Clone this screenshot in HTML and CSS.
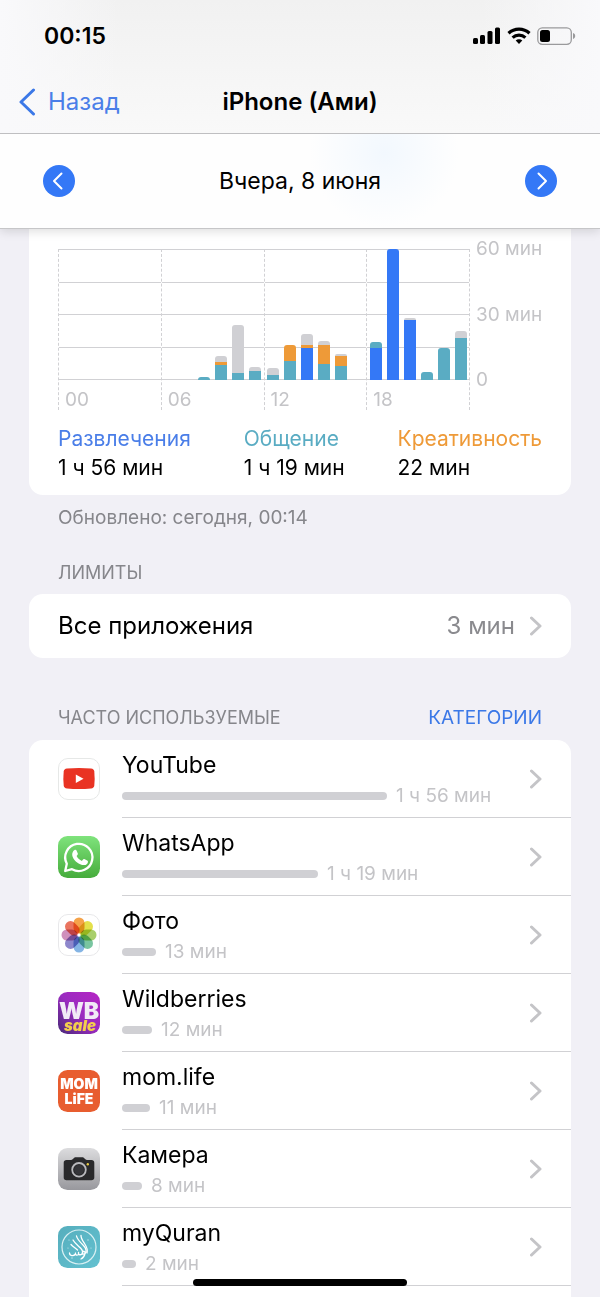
FILE: index.html
```html
<!DOCTYPE html>
<html lang="ru">
<head>
  <meta charset="UTF-8">
  <meta name="viewport" content="width=device-width, initial-scale=1.0">
  <title>iPhone (Ами)</title>
  <link rel="stylesheet" href="styles.css">
</head>
<body>

  <header class="top">
    <div class="top-bar">
      <div class="status">
        <span class="time">00:15</span>
        <span class="status-icons">
          <svg width="28" height="18" viewBox="0 0 28 18">
            <rect x="0" y="11" width="5" height="6" rx="1.5"/>
            <rect x="7" y="8" width="5" height="9" rx="1.5"/>
            <rect x="14.500" y="4" width="5" height="13" rx="1.5"/>
            <rect x="22" y="0.500" width="5" height="16.500" rx="1.5"/>
          </svg>
          <svg width="24" height="18" viewBox="0 0 24 18" fill="none" stroke="#000" stroke-width="3.200">
            <path d="M1.500 6.300a15.500 15.500 0 0 1 21 0"/>
            <path d="M5.600 10.600a9.500 9.500 0 0 1 12.800 0"/>
            <path d="M12 17l-3.300-3.400a4.700 4.700 0 0 1 6.600 0z" fill="#000" stroke="none"/>
          </svg>
          <svg width="39" height="18" viewBox="0 0 39 18">
            <rect x="0.800" y="0.800" width="33.500" height="16.500" rx="4.500" fill="none" stroke="#9a9a9c" stroke-width="1.300"/>
            <rect x="3" y="3" width="10" height="12" rx="2.500"/>
            <path d="M36 6v6c1.400-.4 2.200-1.600 2.200-3S37.400 6.400 36 6z" fill="#9a9a9c"/>
          </svg>
        </span>
      </div>
      <nav class="nav">
        <a class="back" href="#">
          <svg width="18" height="28" viewBox="0 0 18 28"><path d="M15.500 2L3 14l12.500 12"/></svg>
          Назад
        </a>
        <h1>iPhone (Ами)</h1>
      </nav>
    </div>
    <div class="date-bar">
      <button class="round" aria-label="Предыдущий день">
        <svg width="32" height="32" viewBox="0 0 32 32"><path d="M18.500 8.500L11 16l7.500 7.500"/></svg>
      </button>
      <span class="date">Вчера, 8 июня</span>
      <button class="round" aria-label="Следующий день">
        <svg width="32" height="32" viewBox="0 0 32 32"><path d="M13.500 8.500L21 16l-7.500 7.500"/></svg>
      </button>
    </div>
  </header>

  <main>
    <section class="card usage">
      <div class="chart">
        <div class="plot" id="plot"></div>
        <div class="scale"><span>60 мин</span><span>30 мин</span><span>0</span></div>
      </div>
      <dl class="legend">
        <div><dt class="fun">Развлечения</dt><dd>1 ч 56 мин</dd></div>
        <div><dt class="social">Общение</dt><dd>1 ч 19 мин</dd></div>
        <div><dt class="creative">Креативность</dt><dd>22 мин</dd></div>
      </dl>
    </section>
    <p class="updated">Обновлено: сегодня, 00:14</p>

    <h2 class="caption limits-title">Лимиты</h2>
    <a class="card limit" href="#">
      <span>Все приложения</span>
      <span class="limit-value">3 мин</span>
      <svg class="chevron" width="12" height="20" viewBox="0 0 12 20"><path d="M1.500 2l8.500 8-8.500 8"/></svg>
    </a>

    <div class="list-head">
      <h2 class="caption">Часто используемые</h2>
      <button class="switch">Категории</button>
    </div>
    <div class="card apps">
      <a class="app" href="#">
        <svg class="icon" viewBox="0 0 42 42">
          <rect x="0.500" y="0.500" width="41" height="41" rx="9.500" fill="#fff" stroke="#e6e8e7"/>
          <path d="M9 10.500q12-1 24 0 3 .3 3.300 3 .7 7 0 14-.3 2.700-3.300 3-12 1-24 0-3-.3-3.300-3-.7-7 0-14 .3-2.700 3.300-3z" fill="#e93323"/>
          <path d="M17.800 16.500v8.500l7.700-4.300z" fill="#fff"/>
        </svg>
        <span class="info">
          <span class="name">YouTube</span>
          <span class="spent"><i style="width:265px"></i>1 ч 56 мин</span>
        </span>
        <svg class="chevron" width="12" height="20" viewBox="0 0 12 20"><path d="M1.500 2l8.500 8-8.500 8"/></svg>
      </a>
      <a class="app" href="#">
        <svg class="icon" viewBox="0 0 42 42">
          <defs><linearGradient id="wa" x2="0" y2="1"><stop stop-color="#7fe37c"/><stop offset="1" stop-color="#46ac3c"/></linearGradient></defs>
          <rect width="42" height="42" rx="9.500" fill="url(#wa)"/>
          <path d="M8.800 27.800A13.600 13.600 0 1 1 14 33.200L7.200 35z" fill="none" stroke="#fff" stroke-width="2.300" stroke-linejoin="round"/>
          <path d="M16.200 14.200c1-.7 1.900-.6 2.300.3l1.300 3.100c.3.800-.2 1.300-1.200 2.500 1.300 2.400 3 3.900 5.300 4.900 1.300-1.600 1.700-2.200 2.500-1.900l3.200 1.600c.7.400.3 2.300-.6 3.200-1.600 1.500-4 1.500-6.800.3-4.300-1.900-7.700-5.900-8-9.300-.1-2 .8-3.900 2-4.700z" fill="#fff"/>
        </svg>
        <span class="info">
          <span class="name">WhatsApp</span>
          <span class="spent"><i style="width:196px"></i>1 ч 19 мин</span>
        </span>
        <svg class="chevron" width="12" height="20" viewBox="0 0 12 20"><path d="M1.500 2l8.500 8-8.500 8"/></svg>
      </a>
      <a class="app" href="#">
        <svg class="icon photos" viewBox="0 0 42 42">
          <rect x="0.500" y="0.500" width="41" height="41" rx="9.500" fill="#fff" stroke="#e8e8ea"/>
          <g>
            <rect x="15.500" y="3.500" width="11" height="16" rx="5.500" fill="#f5a34a"/>
            <rect x="15.500" y="3.500" width="11" height="16" rx="5.500" fill="#e4e04b" transform="rotate(45 21 21)"/>
            <rect x="15.500" y="3.500" width="11" height="16" rx="5.500" fill="#a9cf6b" transform="rotate(90 21 21)"/>
            <rect x="15.500" y="3.500" width="11" height="16" rx="5.500" fill="#79c5a0" transform="rotate(135 21 21)"/>
            <rect x="15.500" y="3.500" width="11" height="16" rx="5.500" fill="#84b4e4" transform="rotate(180 21 21)"/>
            <rect x="15.500" y="3.500" width="11" height="16" rx="5.500" fill="#8e87cc" transform="rotate(225 21 21)"/>
            <rect x="15.500" y="3.500" width="11" height="16" rx="5.500" fill="#cf8fbc" transform="rotate(270 21 21)"/>
            <rect x="15.500" y="3.500" width="11" height="16" rx="5.500" fill="#ea7560" transform="rotate(315 21 21)"/>
          </g>
        </svg>
        <span class="info">
          <span class="name">Фото</span>
          <span class="spent"><i style="width:34px"></i>13 мин</span>
        </span>
        <svg class="chevron" width="12" height="20" viewBox="0 0 12 20"><path d="M1.500 2l8.500 8-8.500 8"/></svg>
      </a>
      <a class="app" href="#">
        <svg class="icon" viewBox="0 0 42 42">
          <defs><linearGradient id="wb" x1="1" x2="0" y2="1"><stop stop-color="#b625c4"/><stop offset="0.500" stop-color="#9a2bc0"/><stop offset="1" stop-color="#482a78"/></linearGradient></defs>
          <rect width="42" height="42" rx="9.500" fill="url(#wb)"/>
          <text class="wb" x="21" y="27" text-anchor="middle">WB</text>
          <text class="sale" x="22" y="39" text-anchor="middle">sale</text>
        </svg>
        <span class="info">
          <span class="name">Wildberries</span>
          <span class="spent"><i style="width:30px"></i>12 мин</span>
        </span>
        <svg class="chevron" width="12" height="20" viewBox="0 0 12 20"><path d="M1.500 2l8.500 8-8.500 8"/></svg>
      </a>
      <a class="app" href="#">
        <svg class="icon" viewBox="0 0 42 42">
          <rect width="42" height="42" rx="9.500" fill="#e85d2f"/>
          <text class="mom" x="21" y="19" text-anchor="middle">MOM</text>
          <text class="mom" x="21" y="34" text-anchor="middle">LiFE</text>
        </svg>
        <span class="info">
          <span class="name">mom.life</span>
          <span class="spent"><i style="width:28px"></i>11 мин</span>
        </span>
        <svg class="chevron" width="12" height="20" viewBox="0 0 12 20"><path d="M1.500 2l8.500 8-8.500 8"/></svg>
      </a>
      <a class="app" href="#">
        <svg class="icon" viewBox="0 0 42 42">
          <defs><linearGradient id="cam" x2="0" y2="1"><stop stop-color="#dcdcde"/><stop offset="1" stop-color="#98989d"/></linearGradient></defs>
          <rect width="42" height="42" rx="9.500" fill="url(#cam)"/>
          <path d="M8.500 12h4.700c1.600 0 2.500-2.800 4-2.800h7.600c1.500 0 2.400 2.800 4 2.800h4.700c1.700 0 2.800 1 2.800 2.800v14.700c0 1.800-1.100 2.800-2.800 2.800h-25c-1.700 0-2.800-1-2.800-2.800V14.800c0-1.800 1.100-2.800 2.800-2.800z" fill="#29292b"/>
          <circle cx="21" cy="21.800" r="6.800" fill="#29292b" stroke="#b9b9bd" stroke-width="1.800"/>
          <circle cx="21" cy="21.800" r="4.800" fill="#343438"/>
          <circle cx="29.800" cy="16.200" r="1.200" fill="#e9cb45"/>
        </svg>
        <span class="info">
          <span class="name">Камера</span>
          <span class="spent"><i style="width:20px"></i>8 мин</span>
        </span>
        <svg class="chevron" width="12" height="20" viewBox="0 0 12 20"><path d="M1.500 2l8.500 8-8.500 8"/></svg>
      </a>
      <a class="app" href="#">
        <svg class="icon" viewBox="0 0 42 42">
          <defs><linearGradient id="mq" x2="1" y2="1"><stop stop-color="#56aebd"/><stop offset="1" stop-color="#63c1d0"/></linearGradient></defs>
          <rect width="42" height="42" rx="9.500" fill="url(#mq)"/>
          <circle cx="21" cy="21" r="17" fill="none" stroke="#d9f0f3" stroke-width="1.200"/>
          <g fill="none" stroke="#fff" stroke-linecap="round" stroke-width="1.300">
            <path d="M18.500 10c.5 3 3 5.500 6.500 9 2.500 2.500 3.500 4.500 3 7"/>
            <path d="M23 9.500c0 3 1.500 5 3.500 8s3.500 6 2.500 9.500"/>
            <path d="M15 14c2 3.500 5 5.500 7.500 8 2 2 2.800 4 1.500 6.500"/>
            <path d="M13 18.500c2 2.500 4.500 3.500 6.500 5.500M28 26c-1 3-4 2.500-3.500.5s3-1.500 2.500 1-2 4.500-4 5.500"/>
            <path d="M24 28c-2 1.500-4 .5-3.500-1.500M20.500 28.500c-2 1.500-3.500 0-3-1.500M17.500 28c-2 2.500-6 2-6-1"/>
          </g>
          <g fill="#c7e9ee"><circle cx="14" cy="32" r="0.700"/><circle cx="30" cy="14" r="0.700"/><circle cx="11" cy="14" r="0.600"/><circle cx="33" cy="22" r="0.600"/><circle cx="10" cy="22" r="0.600"/></g>
        </svg>
        <span class="info">
          <span class="name">myQuran</span>
          <span class="spent"><i style="width:14px"></i>2 мин</span>
        </span>
        <svg class="chevron" width="12" height="20" viewBox="0 0 12 20"><path d="M1.500 2l8.500 8-8.500 8"/></svg>
      </a>
    </div>
  </main>

  <div class="home"></div>

  <script src="script.js"></script>
</body>
</html>
```

FILE: styles.css
```css
* { box-sizing: border-box; }
body { margin: 0; background: #f1f0f6; color: #000; font-family: Inter, "Noto Sans", sans-serif; font-size: 23px; line-height: 28px; }
a { color: inherit; text-decoration: none; }
button { border: 0; padding: 0; background: none; font: inherit; cursor: pointer; }
h1, h2, p, dl, dd { margin: 0; }
svg { display: block; flex: none; }

/* header */
.top { position: sticky; top: 0; z-index: 2; box-shadow: 0 2px 10px rgba(0, 0, 0, 0.14); }
.top-bar { height: 134px; background: linear-gradient(90deg, #f9f9fb, rgba(249, 249, 251, 0) 20%, rgba(249, 249, 251, 0) 80%, #f9f9fb), linear-gradient(#f1f1f1, #f9f9f9); border-bottom: 1px solid #bfbfc1; }
.status { display: flex; justify-content: space-between; align-items: center; height: 72px; padding: 0 24px 0 44px; }
.time { font-weight: 600; }
.status-icons { display: flex; gap: 6px; }
.nav { display: grid; grid-template-columns: 1fr auto 1fr; align-items: center; height: 60px; padding: 0 18px; font-size: 24px; }
.back { display: flex; align-items: center; gap: 12px; color: #4a7ee8; }
.back path { fill: none; stroke: #3b78e7; stroke-width: 3; stroke-linecap: round; stroke-linejoin: round; }
h1 { font-size: 24px; font-weight: 600; line-height: 28px; }
.date-bar { display: flex; justify-content: space-between; align-items: center; height: 95px; padding: 0 43px; background: radial-gradient(circle at 64% 20%, #f2f8fe, rgba(255, 255, 255, 0) 75px), #fefefe; border-bottom: 1px solid #c6c6c8; }
.round { width: 32px; height: 32px; border-radius: 50%; background: #3478f6; }
.round path { fill: none; stroke: #fff; stroke-width: 2; stroke-linecap: round; stroke-linejoin: round; }

/* cards */
main { padding: 0 29px; }
.card { background: #fff; border-radius: 14px; }
.chevron path { fill: none; stroke: #c4c4c7; stroke-width: 3; stroke-linecap: round; stroke-linejoin: round; }
.caption { font-size: 18px; font-weight: 400; line-height: 24px; color: #86868b; text-transform: uppercase; }

/* chart */
.usage { padding: 20px 29px 13px; border-radius: 0 0 14px 14px; }
.chart { display: flex; font-size: 19px; line-height: 24px; color: #c4c4c7; }
.plot { flex: 1; display: grid; grid-template-columns: repeat(4, 1fr); border-right: 1px dashed #d1d1d4; }
.quarter { border-left: 1px dashed #d1d1d4; }
.hours {
  display: grid; grid-template-columns: repeat(6, 1fr); height: 131px;
  background-image: linear-gradient(#d1d1d4, #d1d1d4), linear-gradient(#d1d1d4, #d1d1d4), linear-gradient(#d1d1d4, #d1d1d4), linear-gradient(#d1d1d4, #d1d1d4), linear-gradient(#d1d1d4, #d1d1d4);
  background-size: 100% 1px;
  background-position: 0 0, 0 25%, 0 50%, 0 75%, 0 100%;
  background-repeat: no-repeat;
}
.bar { display: flex; flex-direction: column-reverse; align-self: end; justify-self: center; width: 12px; height: 100%; }
.bar i:last-child { border-radius: 3px 3px 0 0; }
.quarter span { display: block; padding: 10px 0 0 6px; line-height: 20px; }
.scale { display: flex; flex-direction: column; justify-content: space-between; width: 72px; height: 155px; margin-top: -12px; padding-left: 6px; white-space: nowrap; }
.bg-fun { background: #3478f6; }
.bg-social { background: #5aacc3; }
.bg-creative { background: #ee9a38; }
.bg-other { background: #d0d0d4; }
.legend { display: flex; justify-content: space-between; padding-top: 14px; font-size: 21px; line-height: 29px; }
.fun { color: #4a7ee8; }
.social { color: #5aacc3; }
.creative { color: #ee9a38; }
.updated { padding: 11px 29px 0; font-size: 19px; line-height: 24px; color: #86868b; }

/* limits */
.limits-title { padding: 31px 29px 9px; }
.limit { display: flex; align-items: center; gap: 15px; height: 64px; padding: 0 29px; font-size: 24px; }
.limit-value { margin-left: auto; color: #8a8a8e; }

/* apps */
.list-head { display: flex; justify-content: space-between; padding: 48px 29px 10px; }
.switch { font-size: 19px; line-height: 24px; color: #3b78e7; text-transform: uppercase; }
.apps { padding: 0 0 11px 29px; border-radius: 14px 14px 0 0; }
.app { display: flex; align-items: center; height: 78px; padding-right: 29px; background: linear-gradient(#d1d1d4, #d1d1d4) 64px 100% / 100% 1px no-repeat; }
.icon { width: 42px; height: 42px; margin-right: 22px; }
.info { flex: 1; padding-top: 4px; }
.name { display: block; line-height: 30px; }
.spent { display: flex; align-items: center; gap: 9px; font-size: 19px; line-height: 32px; color: #c4c4c7; }
.spent i { height: 8px; border-radius: 4px; background: #d0d0d4; }
.photos g rect { mix-blend-mode: multiply; }
.icon text { font-weight: 900; fill: #fff; }
.icon .wb { font-size: 23px; fill: #f1eaf6; }
.icon .sale { font-size: 15px; font-style: italic; fill: #f3cf4c; }
.icon .mom { font-size: 14px; }

.home { position: fixed; bottom: 11px; left: 50%; z-index: 3; width: 214px; height: 7px; margin-left: -107px; border-radius: 4px; background: #000; }
```

FILE: script.js
```js
// minutes for each hour: fun, social, creative, other
const hours = {
  8: [0, 1.4, 0, 0],
  9: [0, 6.8, 1.5, 2.6],
  10: [0, 3.1, 0, 22.2],
  11: [0, 4, 0, 1.8],
  12: [0, 2.2, 0, 3.2],
  13: [0, 8.8, 7.4, 0],
  14: [14.7, 0, 1.4, 5.1],
  15: [0, 7.4, 8.5, 2.2],
  16: [0, 6.5, 4.6, 0.9],
  18: [14.7, 2.5, 0, 0],
  19: [60, 0, 0, 0],
  20: [27.7, 0, 0, 0.9],
  21: [0, 3.6, 0, 0],
  22: [0, 14.7, 0, 0],
  23: [0, 19.2, 0, 3.1]
};
const kinds = ["fun", "social", "creative", "other"];

let html = "";
for (let q = 0; q < 4; q++) {
  html += '<div class="quarter"><div class="hours">';
  for (let h = q * 6; h < q * 6 + 6; h++) {
    html += '<div class="bar">';
    (hours[h] || []).forEach((min, k) => {
      if (min) html += `<i class="bg-${kinds[k]}" style="height:${min / 60 * 100}%"></i>`;
    });
    html += "</div>";
  }
  html += `</div><span>${String(q * 6).padStart(2, "0")}</span></div>`;
}
document.getElementById("plot").innerHTML = html;
```
